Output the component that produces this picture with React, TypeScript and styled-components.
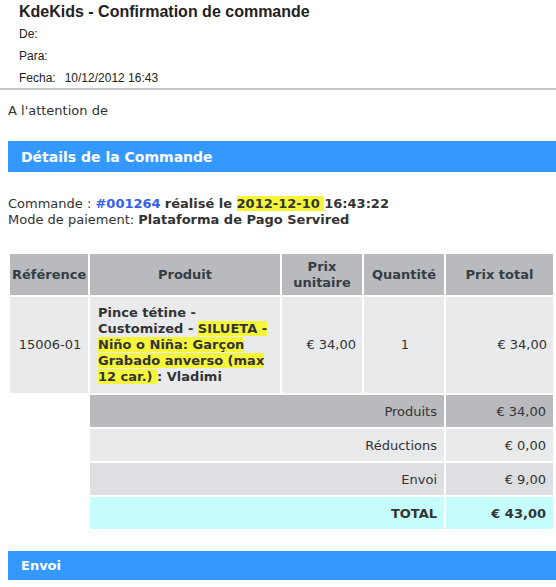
import React from "react";
import styled, { createGlobalStyle } from "styled-components";

const GlobalStyle = createGlobalStyle`
  html, body { margin: 0; padding: 0; background: #ffffff; }
  body { font-family: Verdana, "DejaVu Sans", sans-serif; color: #333333; }
`;

const Page = styled.div`
  width: 556px;
  overflow: hidden;
`;

const MailHeader = styled.div`
  padding: 2px 0 0 19px;
  font-family: "Liberation Sans", Arial, sans-serif;
  color: #222222;
  height: 88px;
  box-sizing: border-box;
`;

const Title = styled.div`
  font-size: 16px;
  font-weight: bold;
  line-height: 20px;
  color: #222;
`;

const MetaRow = styled.div<{ $first?: boolean }>`
  font-size: 12px;
  line-height: 22px;
  display: flex;
  gap: 9px;
  margin-top: ${(p) => (p.$first ? "1px" : "0")};
`;

const Divider = styled.hr`
  margin: 0;
  border: none;
  border-top: 2px solid #c8c8c8;
  height: 0;
`;

const Body = styled.div`
  padding: 13px 0 0 8px;
  font-size: 13px;
`;

const Attention = styled.div`
  font-size: 13px;
  line-height: 16px;
  color: #333;
`;

const SectionBar = styled.div<{ $mt: number; $h: number }>`
  margin-top: ${(p) => p.$mt}px;
  height: ${(p) => p.$h}px;
  background: #3399ff;
  color: #ffffff;
  font-weight: bold;
  font-size: ${(p) => (p.$h > 30 ? 14 : 13)}px;
  display: flex;
  align-items: center;
  padding-left: 13px;
`;

const OrderInfo = styled.div`
  margin-top: 24px;
  font-size: 13px;
  line-height: 16px;
  color: #333;
`;

const Strong = styled.span`
  font-weight: bold;
`;

const Link = styled.span`
  font-weight: bold;
  color: #3360ee;
`;

const Mark = styled.span`
  background: #f5f53a;
`;

const Table = styled.table`
  margin-top: 24px;
  width: 547px;
  border-collapse: separate;
  border-spacing: 2px;
  margin-left: 0;
  font-size: 13px;
  color: #333;
  table-layout: fixed;
`;

const Th = styled.th<{ $w: number }>`
  width: ${(p) => p.$w}px;
  background: #b9babe;
  height: 41px;
  padding: 0 2px;
  font-size: 13px;
  font-weight: bold;
  line-height: 16px;
  color: #353d45;
  text-align: center;
  box-sizing: border-box;
`;

const Td = styled.td<{ $align?: string; $bold?: boolean }>`
  background: #e9eaec;
  padding: 8px 6px 8px 8px;
  line-height: 16px;
  vertical-align: middle;
  text-align: ${(p) => p.$align || "left"};
  font-weight: ${(p) => (p.$bold ? "bold" : "normal")};
  white-space: nowrap;
`;

const Blank = styled.td`
  background: transparent;
`;

const SumCell = styled.td<{ $bg: string; $bold?: boolean }>`
  background: ${(p) => p.$bg};
  height: 32px;
  padding: 0 7px;
  text-align: right;
  font-size: 13px;
  font-weight: ${(p) => (p.$bold ? "bold" : "normal")};
  box-sizing: border-box;
`;

const sums = [
  { label: "Produits", value: "€ 34,00", bg: "#b9babe" },
  { label: "Réductions", value: "€ 0,00", bg: "#e9eaec" },
  { label: "Envoi", value: "€ 9,00", bg: "#dddfe3" },
  { label: "TOTAL", value: "€ 43,00", bg: "#c6fdfd", bold: true },
];

export default function App() {
  return (
    <Page>
      <GlobalStyle />
      <MailHeader>
        <Title>KdeKids - Confirmation de commande</Title>
        <MetaRow $first>De:</MetaRow>
        <MetaRow>Para:</MetaRow>
        <MetaRow>
          <span>Fecha:</span>
          <span>10/12/2012 16:43</span>
        </MetaRow>
      </MailHeader>
      <Divider />
      <Body>
        <Attention>A l'attention de</Attention>
        <SectionBar $mt={22} $h={31}>Détails de la Commande</SectionBar>
        <OrderInfo>
          Commande : <Link>#001264</Link> <Strong>réalisé le </Strong>
          <Strong><Mark>2012-12-10 </Mark>16:43:22</Strong>
          <br />
          Mode de paiement: <Strong>Plataforma de Pago Servired</Strong>
        </OrderInfo>
        <Table>
          <thead>
            <tr>
              <Th $w={78}>Référence</Th>
              <Th $w={190}>Produit</Th>
              <Th $w={80}>
                Prix
                <br />
                unitaire
              </Th>
              <Th $w={80}>Quantité</Th>
              <Th $w={107}>Prix total</Th>
            </tr>
          </thead>
          <tbody>
            <tr>
              <Td $align="center">15006-01</Td>
              <Td $bold>
                Pince tétine -<br />
                Customized - <Mark>SILUETA -<br />
                Niño o Niña: Garçon<br />
                Grabado anverso (max<br />
                12 car.) </Mark>: Vladimi
              </Td>
              <Td $align="right">€ 34,00</Td>
              <Td $align="center">1</Td>
              <Td $align="right">€ 34,00</Td>
            </tr>
            {sums.map((s) => (
              <tr key={s.label}>
                <Blank />
                <SumCell colSpan={3} $bg={s.bg} $bold={s.bold}>
                  {s.label}
                </SumCell>
                <SumCell $bg={s.bg} $bold={s.bold}>
                  {s.value}
                </SumCell>
              </tr>
            ))}
          </tbody>
        </Table>
        <SectionBar $mt={20} $h={29}>Envoi</SectionBar>
      </Body>
    </Page>
  );
}
